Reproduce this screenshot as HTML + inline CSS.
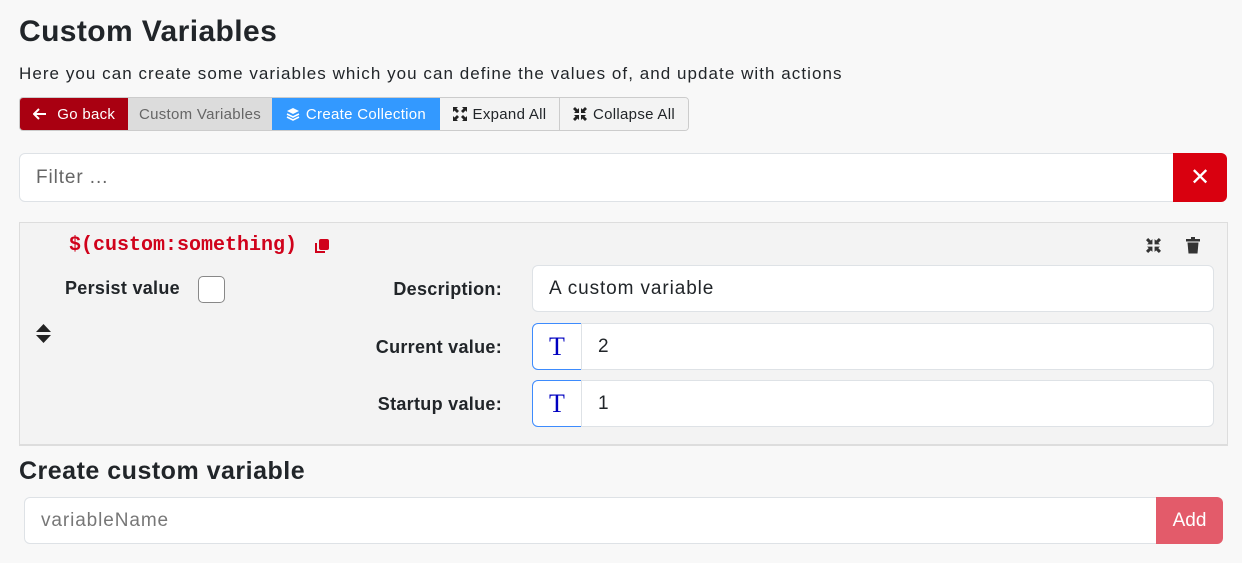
<!DOCTYPE html>
<html><head><style>
*{box-sizing:border-box;margin:0;padding:0}
body{width:1242px;height:563px;background:#f8f8f8;font-family:"Liberation Sans",sans-serif;color:#212529;position:relative;overflow:hidden}
.a{position:absolute}
h1{position:absolute;left:19px;top:15px;font-size:30px;font-weight:bold;letter-spacing:0.4px}
.sub{left:19px;top:64px;font-size:17px;letter-spacing:1.05px}
.btns{left:19px;top:97px;height:34px;display:flex;border-radius:4px;overflow:hidden;border:1px solid #ccc;font-size:15px;letter-spacing:0.3px}
.btns div{display:flex;align-items:center;justify-content:center;height:100%;gap:6px;flex:none}
.lbl{font-weight:bold;font-size:18px;text-align:right;letter-spacing:0.3px}
.inp{background:#fff;border:1px solid #dee2e6;border-radius:6px;font-size:19px;display:flex;align-items:center;padding-left:16px;letter-spacing:0.9px}
.tb{background:#fff;border:1px solid #3d8bfd;border-radius:6px 0 0 6px;width:50px;height:47px;color:#0000c0;font-family:"Liberation Serif",serif;font-size:26px;display:flex;align-items:center;justify-content:center}
</style></head><body>
<h1>Custom Variables</h1>
<div class="a sub">Here you can create some variables which you can define the values of, and update with actions</div>
<div class="a btns">
<div style="background:#a90011;color:#fff;width:108px"><svg width="14" height="12" viewBox="0 0 14 12"><path d="M13 6H2M6 1L1 6l5 5" stroke="#fff" stroke-width="2" fill="none"/></svg>&nbsp;Go back</div>
<div style="background:#dcdcdc;color:#666;width:144px">Custom Variables</div>
<div style="background:#3399ff;color:#fff;width:168px"><svg width="14" height="14" viewBox="0 0 14 14"><path d="M7 1L13 4L7 7L1 4Z" fill="#fff"/><path d="M1 7L7 10L13 7M1 10L7 13L13 10" stroke="#fff" stroke-width="1.6" fill="none"/></svg>Create Collection</div>
<div style="background:#f3f3f3;border-right:1px solid #ccc;width:120px"><svg width="14" height="14" viewBox="0 0 14 14" fill="#222"><path d="M0 0h5L3.5 1.5 6 4 4 6 1.5 3.5 0 5zM14 0v5L12.5 3.5 10 6 8 4 10.5 1.5 9 0zM0 14V9l1.5 1.5L4 8l2 2-2.5 2.5L5 14zM14 14H9l1.5-1.5L8 10l2-2 2.5 2.5L14 9z"/></svg>Expand All</div>
<div style="background:#f3f3f3;width:128px"><svg width="14" height="14" viewBox="0 0 14 14" fill="#222"><path d="M6 6H1l1.5-1.5L0 2 2 0l2.5 2.5L6 1zM8 6V1l1.5 1.5L12 0l2 2-2.5 2.5L13 6zM6 8v5l-1.5-1.5L2 14l-2-2 2.5-2.5L1 8zM8 8h5l-1.5 1.5L14 12l-2 2-2.5-2.5L8 13z"/></svg>Collapse All</div>
</div>
<div class="a inp" style="left:19px;top:153px;width:1160px;height:49px;border-radius:6px 0 0 6px;color:#666">Filter ...</div>
<div class="a" style="left:1173px;top:153px;width:54px;height:49px;background:#d9000f;border-radius:0 6px 6px 0;color:#fff;font-size:24px;display:flex;align-items:center;justify-content:center">✕</div>
<div class="a" style="left:19px;top:222px;width:1209px;height:224px;background:#f3f3f3;border:1px solid #ddd;border-bottom:2px solid #ddd"></div>
<div class="a" style="left:69px;top:234px;font-family:'Liberation Mono',monospace;font-weight:bold;color:#d0021b;font-size:20px">$(custom:something)</div>
<svg class="a" style="left:315px;top:239px" width="14" height="15" viewBox="0 0 14 15"><rect x="4" y="0" width="10" height="11" rx="2" fill="#d0021b"/><path d="M1 4v9h9" stroke="#d0021b" stroke-width="2" fill="none"/></svg>
<svg class="a" style="left:1146px;top:238px" width="15" height="15" viewBox="0 0 14 14" fill="#333"><path d="M6 6H1l1.5-1.5L0 2 2 0l2.5 2.5L6 1zM8 6V1l1.5 1.5L12 0l2 2-2.5 2.5L13 6zM6 8v5l-1.5-1.5L2 14l-2-2 2.5-2.5L1 8zM8 8h5l-1.5 1.5L14 12l-2 2-2.5-2.5L8 13z"/></svg>
<svg class="a" style="left:1186px;top:237px" width="14" height="17" viewBox="0 0 14 17" fill="#333"><rect x="0" y="2" width="14" height="2.5"/><rect x="5" y="0" width="4" height="2"/><path d="M1.5 5.5h11l-1 11h-9z"/></svg>
<div class="a lbl" style="left:65px;top:278px">Persist value</div>
<div class="a" style="left:198px;top:276px;width:27px;height:27px;border:1px solid #888;border-radius:5px;background:#fff"></div>
<svg class="a" style="left:36px;top:324px" width="15" height="19" viewBox="0 0 15 19" fill="#222"><path d="M7.5 0L15 8H0zM0 11h15l-7.5 8z"/></svg>
<div class="a lbl" style="left:300px;width:202px;top:279px">Description:</div>
<div class="a lbl" style="left:300px;width:202px;top:337px">Current value:</div>
<div class="a lbl" style="left:300px;width:202px;top:394px">Startup value:</div>
<div class="a inp" style="left:532px;top:265px;width:682px;height:47px">A custom variable</div>
<div class="a tb" style="left:532px;top:323px">T</div>
<div class="a inp" style="left:581px;top:323px;width:633px;height:47px;border-radius:0 6px 6px 0">2</div>
<div class="a tb" style="left:532px;top:380px">T</div>
<div class="a inp" style="left:581px;top:380px;width:633px;height:47px;border-radius:0 6px 6px 0">1</div>
<div class="a" style="left:19px;top:457px;font-size:25px;font-weight:bold;letter-spacing:0.5px">Create custom variable</div>
<div class="a inp" style="left:24px;top:497px;width:1135px;height:47px;border-radius:6px 0 0 6px;color:#777">variableName</div>
<div class="a" style="left:1156px;top:497px;width:67px;height:47px;background:#e35b6a;border-radius:0 6px 6px 0;color:#fff;font-size:19px;display:flex;align-items:center;justify-content:center">Add</div>
</body></html>
